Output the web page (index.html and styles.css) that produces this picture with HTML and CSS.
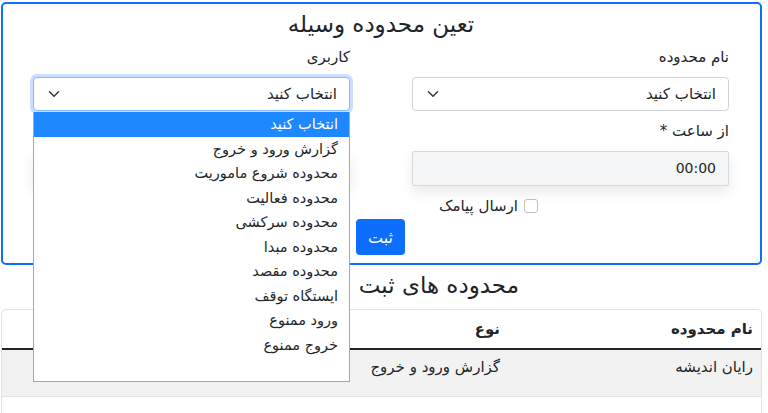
FILE: index.html
```html
<!DOCTYPE html>
<html lang="fa" dir="rtl">
<head>
<meta charset="utf-8">
<title>تعین محدوده وسیله</title>
<link rel="stylesheet" href="styles.css">
</head>
<body>
<div class="page">
  <section class="form-card">
    <h2 class="title">تعین محدوده وسیله</h2>
    <div class="form-grid">
      <div class="field">
        <label class="form-label">نام محدوده</label>
        <div class="select">
          <span>انتخاب کنید</span>
          <svg class="chev" viewBox="0 0 16 16" width="16" height="12"><path d="M2 5l6 6 6-6" fill="none" stroke="#343a40" stroke-width="2" stroke-linecap="round" stroke-linejoin="round"/></svg>
        </div>
      </div>
      <div class="field field-user">
        <label class="form-label">کاربری</label>
        <div class="select focused">
          <span>انتخاب کنید</span>
          <svg class="chev" viewBox="0 0 16 16" width="16" height="12"><path d="M2 5l6 6 6-6" fill="none" stroke="#343a40" stroke-width="2" stroke-linecap="round" stroke-linejoin="round"/></svg>
        </div>
        <ul class="dropdown">
          <li class="active">انتخاب کنید</li>
          <li>گزارش ورود و خروج</li>
          <li>محدوده شروع ماموریت</li>
          <li>محدوده فعالیت</li>
          <li>محدوده سرکشی</li>
          <li>محدوده مبدا</li>
          <li>محدوده مقصد</li>
          <li>ایستگاه توقف</li>
          <li>ورود ممنوع</li>
          <li>خروج ممنوع</li>
        </ul>
      </div>
      <div class="field">
        <label class="form-label">از ساعت *</label>
        <div class="time-input">00:00</div>
      </div>
      <div class="field">
        <label class="form-label">تا ساعت *</label>
        <div class="time-input">23:59</div>
      </div>
    </div>
    <div class="check-row">
      <span class="checkbox"></span>
      <span class="check-label">ارسال پیامک</span>
    </div>
    <div class="btn-row">
      <button class="btn-primary">ثبت</button>
    </div>
  </section>

  <h2 class="title list-title">محدوده های ثبت شده</h2>

  <div class="table-card">
    <table class="table">
      <thead>
        <tr>
          <th class="col-name">نام محدوده</th>
          <th class="col-type">نوع</th>
          <th class="col-actions"></th>
        </tr>
      </thead>
      <tbody>
        <tr class="striped">
          <td>رایان اندیشه</td>
          <td>گزارش ورود و خروج</td>
          <td></td>
        </tr>
        <tr>
          <td></td>
          <td></td>
          <td></td>
        </tr>
      </tbody>
    </table>
  </div>
</div>
</body>
</html>
```

FILE: styles.css
```css
* { box-sizing: border-box; }

html, body {
  margin: 0;
  padding: 0;
  background: #fff;
}

body {
  direction: rtl;
  font-family: "DejaVu Sans", "Noto Sans", sans-serif;
  font-size: 15px;
  color: #212529;
}

.page {
  padding: 2px 6px 0 1px;
}

.form-card {
  border: 2px solid #0d6efd;
  border-radius: 5px;
  padding: 6px 31px 8px 30px;
}

.title {
  margin: 0;
  font-size: 23px;
  font-weight: 400;
  line-height: 28px;
  text-align: center;
}

.form-card .title {
  margin-bottom: 8px;
}

.form-grid {
  display: grid;
  grid-template-columns: 1fr 1fr;
  column-gap: 62px;
  row-gap: 9px;
}

.field {
  position: relative;
  display: flex;
  flex-direction: column;
}

.form-label {
  display: block;
  line-height: 22px;
  margin-bottom: 9px;
}

.select {
  display: flex;
  align-items: center;
  justify-content: space-between;
  height: 34px;
  padding: 0 12px 0 12px;
  border: 1px solid #ced4da;
  border-radius: 4px;
  background: #fff;
}

.select.focused {
  border-color: #86b7fe;
  box-shadow: 0 0 0 3px rgba(13, 110, 253, 0.22);
}

.chev {
  display: block;
}

.time-input {
  height: 35px;
  line-height: 33px;
  padding: 0 12px;
  font-size: 14px;
  border: 1px solid #d6dade;
  border-radius: 2px;
  background: #f4f5f7;
  box-shadow: 0 6px 14px rgba(0, 0, 0, 0.09);
}

.dropdown {
  position: absolute;
  top: 100%;
  left: 0;
  right: 0;
  height: 270px;
  margin: 1px 0 0;
  padding: 0;
  list-style: none;
  background: #fff;
  border: 1px solid #a7a7a7;
  border-top: none;
  z-index: 10;
}

.dropdown li {
  height: 24.5px;
  line-height: 25px;
  padding: 0 11px;
  font-size: 14.5px;
  color: #212529;
  white-space: nowrap;
}

.dropdown li.active {
  background: #1e88ff;
  color: #fff;
}

.check-row {
  display: flex;
  align-items: center;
  gap: 6px;
  height: 22px;
  margin-top: 9px;
  padding-right: 191px;
}

.checkbox {
  width: 14px;
  height: 14px;
  border: 1px solid #bfc4c9;
  border-radius: 3px;
  background: #fff;
}

.btn-row {
  display: flex;
  margin-top: 2px;
  padding-right: 324px;
}

.btn-primary {
  width: 49px;
  height: 36px;
  border: none;
  border-radius: 4px;
  background: #0d6efd;
  color: #fff;
  font-family: "DejaVu Sans", "Noto Sans", sans-serif;
  font-size: 16px;
}

.list-title {
  margin-top: 6px;
  margin-bottom: 10px;
  text-align: right;
  padding-right: 243px;
}

.table-card {
  border: 1px solid #dee2e6;
  border-radius: 5px;
  overflow: hidden;
}

.table {
  width: 100%;
  border-collapse: collapse;
}

.table th,
.table td {
  padding: 8px 8px;
  text-align: right;
  line-height: 22px;
}

.table th {
  font-weight: 700;
  vertical-align: middle;
  border-bottom: 2px solid #212529;
  height: 38px;
}

.table td {
  height: 47px;
  padding-top: 6px;
  vertical-align: top;
  border-bottom: 1px solid #dee2e6;
}

.col-name { width: 253px; }
.col-type { width: 252px; }

.striped td {
  background: #f2f2f2;
}
```
